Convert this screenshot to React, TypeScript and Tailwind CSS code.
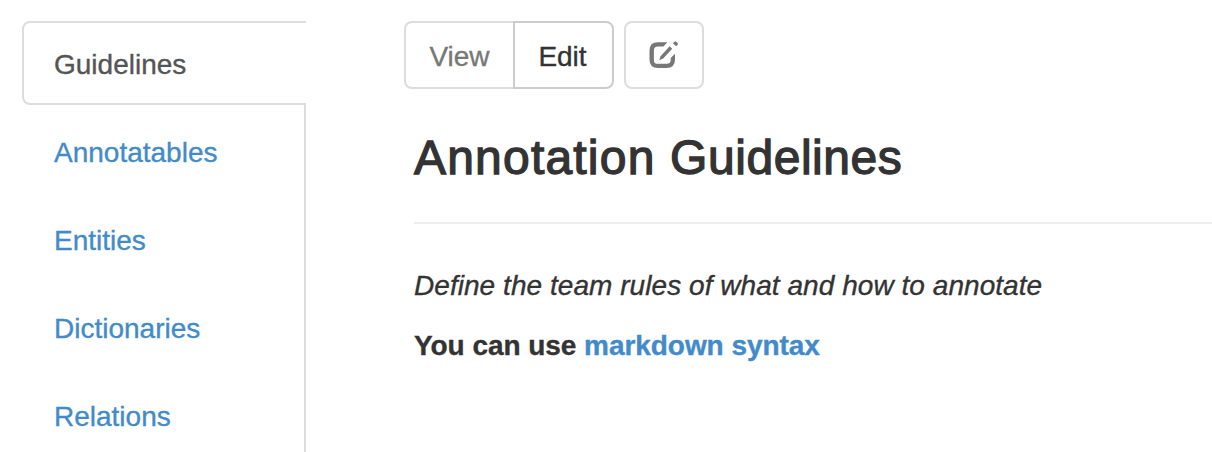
const tabs = ['Annotatables', 'Entities', 'Dictionaries', 'Relations'];

function EditIcon() {
  return (
    <svg width="30" height="28" viewBox="0 0 30 28" className="block" fill="#777777">
      <path d="M18.4 1.3 L14.4 5.5 H8.8 Q4.9 5.5 4.9 9.4 V18.9 Q4.9 22.8 8.8 22.8 H18 Q21.7 22.8 21.7 19.1 V16.9 L26 12.8 V18.6 Q26 27 17.6 27 H8.9 Q0.5 27 0.5 18.6 V9.7 Q0.5 1.3 8.9 1.3 Z" />
      <path d="M10.2 19.2 L11.6 15.2 L20.6 5.3 L23.2 7.7 L14.2 17.4 Z" />
      <path d="M23.9 2.3 L25.5 0.7 Q26.3 0 27.1 0.7 L28.6 2.1 Q29.3 2.9 28.6 3.7 L27.2 5.3 Z" />
    </svg>
  );
}

export default function App() {
  return (
    <div className="flex h-[452px] w-full overflow-hidden bg-white font-['Liberation_Sans',Arial,sans-serif] text-[28px] leading-[40px] text-[#333333] [-webkit-text-stroke:0.35px_currentColor]">
      <nav className="ml-[22px] flex w-[284px] shrink-0 flex-col pt-[21px]">
        <a className="box-content h-[80px] shrink-0 rounded-l-lg border-y-2 border-l-2 border-[#dddddd] pl-[30px] text-[#555555]">
          <span className="block pt-[22px]">Guidelines</span>
        </a>
        <ul className="-mt-[2px] flex grow flex-col gap-12 rounded-tr-[2px] border-r-2 border-[#dddddd] pl-8 pt-[30px] text-[#428bca]">
          {tabs.map((label) => (
            <li key={label}>{label}</li>
          ))}
        </ul>
      </nav>
      <main className="ml-[98px] min-w-0 grow pt-[21px]">
        <div className="flex">
          <button className="h-[68px] w-[109px] rounded-l-lg border-2 border-r-0 border-[#dddddd] pt-[3px] text-[#777777]">
            View
          </button>
          <button className="h-[68px] w-[101px] rounded-r-lg border-2 border-[#cccccc] pt-[3px] pr-[2px] text-[#333333]">
            Edit
          </button>
          <button
            aria-label="Edit document"
            className="ml-[10px] flex h-[68px] w-[80px] items-start justify-center rounded-lg border-2 border-[#dddddd] pt-[18px]"
          >
            <EditIcon />
          </button>
        </div>
        <section className="pl-[10px]">
          <h1 className="mt-[42px] whitespace-nowrap text-[48px] leading-[53px] [-webkit-text-stroke:1.3px_#333333]">
            <span className="tracking-[1.2px]">Annotation </span>
            <span className="tracking-[0.55px]">Guidelines</span>
          </h1>
          <hr className="mt-[38px] border-t-2 border-[#eeeeee]" />
          <p className="mt-[42px] whitespace-nowrap italic tracking-[0.05px]">
            Define the team rules of what and how to annotate
          </p>
          <p className="mt-5 whitespace-nowrap font-bold tracking-[-0.05px]">
            You can use <a className="text-[#428bca]">markdown syntax</a>
          </p>
        </section>
      </main>
    </div>
  );
}
